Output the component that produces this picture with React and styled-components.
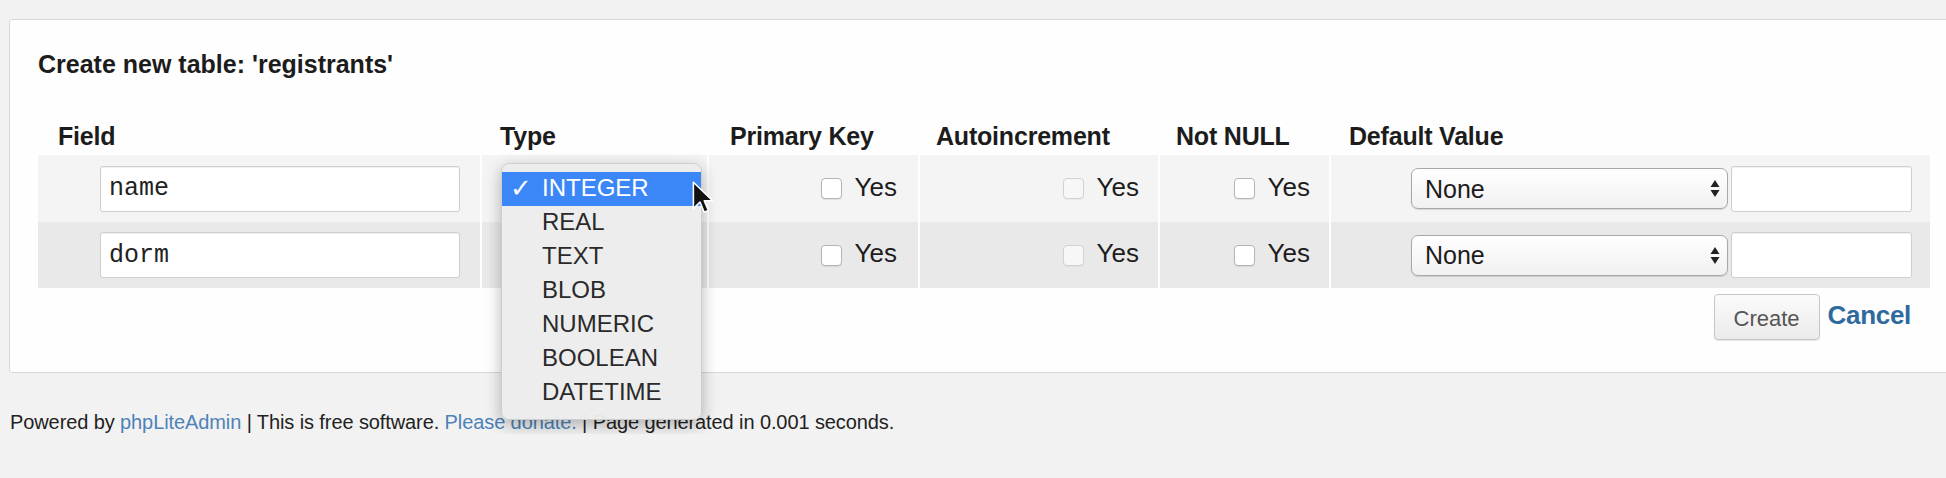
import React from 'react';
import styled, {createGlobalStyle} from 'styled-components';

const GlobalStyle = createGlobalStyle`
    body {
        margin: 0;
        background: #f2f2f2;
        font-family: "Liberation Sans", Helvetica, Arial, sans-serif;
        color: #1c1c1c;
        overflow: hidden;
    }
`

const COLUMNS = '442px 225px 209px 238px 169px 599px';

const Page = styled.div`
    padding: 19px 0 0 9px;
    width: 1946px;
    box-sizing: border-box;
`

const Panel = styled.div`
    width: 1960px;
    box-sizing: border-box;
    background: #fefefe;
    border: 1px solid #d8d8d8;
    border-radius: 3px;
    padding: 30px 0 32px 28px;
`

const Title = styled.h2`
    margin: 0 0 44px;
    font-size: 25px;
    line-height: 28px;
    font-weight: bold;
`

const Row = styled.div`
    display: grid;
    grid-template-columns: ${COLUMNS};
    column-gap: 2px;
    height: ${p => p.$height || 66}px;
`

const HeadCell = styled.div`
    font-size: 25px;
    font-weight: bold;
    line-height: 28px;
    padding-left: ${p => p.$pad || 18}px;
    letter-spacing: -0.2px;
`

const Cell = styled.div`
    position: relative;
    display: flex;
    align-items: center;
    justify-content: ${p => p.$justify || 'flex-end'};
    padding: 0 ${p => p.$padRight ?? 20}px 0 ${p => p.$padLeft || 0}px;
    background: ${p => (p.$dark ? '#e9e9e9' : '#f4f4f4')};
`

const TextInput = styled.input`
    box-sizing: border-box;
    width: ${p => p.$width || 360}px;
    height: 46px;
    border: 1px solid #cfcfcf;
    border-radius: 3px;
    background: #fff;
    box-shadow: inset 0 1px 1px rgba(0, 0, 0, 0.06);
    font-family: "Liberation Mono", "Courier New", monospace;
    font-size: 25px;
    padding: 0 8px 0;
    color: #222;
    outline: none;
`

const Check = styled.span`
    display: inline-block;
    width: 19px;
    height: 19px;
    border-radius: 4px;
    border: 1px solid ${p => (p.$disabled ? '#d2d2d2' : '#b4b4b4')};
    background: ${p => (p.$disabled ? '#f7f7f7' : '#fff')};
    box-shadow: 0 1px 1px rgba(0, 0, 0, ${p => (p.$disabled ? 0.04 : 0.08)});
`

const Yes = styled.span`
    font-size: 26px;
    margin-left: 13px;
    margin-top: -3px;
    color: #1c1c1c;
`

const SelectWrap = styled.div`
    position: relative;
    width: 317px;
    height: 41px;
`

const Select = styled.select`
    appearance: none;
    width: 100%;
    height: 100%;
    box-sizing: border-box;
    border: 1px solid #a8a8a8;
    border-radius: 7px;
    background: linear-gradient(#ffffff, #f1f1f1);
    font-family: "Liberation Sans", Helvetica, Arial, sans-serif;
    font-size: 25px;
    color: #1c1c1c;
    padding: 0 0 0 13px;
    box-shadow: 0 1px 1px rgba(0, 0, 0, 0.12);
`

const Arrows = styled.svg`
    position: absolute;
    right: 8px;
    top: 11px;
    pointer-events: none;
`

const Actions = styled.div`
    display: flex;
    justify-content: flex-end;
    align-items: center;
    width: 1892px;
    margin-top: 6px;
    padding-right: 19px;
    box-sizing: border-box;
`

const Button = styled.button`
    width: 106px;
    height: 46px;
    border: 1px solid #c6c6c6;
    border-radius: 4px;
    background: linear-gradient(#fbfbfb, #ebebeb);
    box-shadow: 0 1px 1px rgba(0, 0, 0, 0.1);
    font-family: "Liberation Sans", Helvetica, Arial, sans-serif;
    font-size: 22px;
    color: #555;
    padding-top: 4px;
`

const CancelLink = styled.a`
    font-size: 26px;
    font-weight: bold;
    color: #2e6a9e;
    text-decoration: none;
    margin-left: 8px;
    margin-top: -4px;
    letter-spacing: -0.3px;
`

const Footer = styled.div`
    margin: 37px 0 0 1px;
    font-size: 20px;
    line-height: 24px;
    color: #222;
    letter-spacing: -0.1px;
`

const FootLink = styled.a`
    color: #4d82b8;
    text-decoration: none;
`

const Dropdown = styled.ul`
    position: absolute;
    left: 19px;
    top: 8px;
    width: 201px;
    margin: 0;
    padding: 8px 0 9px;
    list-style: none;
    background: rgba(236, 236, 236, 0.97);
    border: 1px solid #cdcdcd;
    border-radius: 8px;
    box-shadow: 0 5px 16px rgba(0, 0, 0, 0.28);
    z-index: 10;
    box-sizing: border-box;
`

const Option = styled.li`
    position: relative;
    height: 34px;
    line-height: 32px;
    padding-left: 40px;
    font-size: 24px;
    color: ${p => (p.$selected ? '#fff' : '#2a2a2a')};
    background: ${p => (p.$selected ? '#3b87f7' : 'transparent')};
`

const Tick = styled.span`
    position: absolute;
    left: 8px;
    top: 0;
    font-size: 26px;
    font-weight: bold;
    font-family: "DejaVu Sans", sans-serif;
`

const Cursor = styled.svg`
    position: absolute;
    left: 209px;
    top: 26px;
    z-index: 11;
`

const TYPES = ['INTEGER', 'REAL', 'TEXT', 'BLOB', 'NUMERIC', 'BOOLEAN', 'DATETIME'];

const fields = [
    {name: 'name', dark: false, height: 67},
    {name: 'dorm', dark: true, height: 66},
];

function YesBox({dark, disabled, pad}) {
    return (
        <Cell $dark={dark} $padRight={pad}>
            <Check $disabled={disabled} />
            <Yes>Yes</Yes>
        </Cell>
    );
}

function FieldRow({field, first}) {
    const dark = field.dark;
    return (
        <Row $height={field.height}>
            <Cell $dark={dark}>
                <TextInput defaultValue={field.name} />
            </Cell>
            <Cell $dark={dark} $justify="flex-start" $padRight={0}>
                {first && (
                    <>
                        <Dropdown>
                            {TYPES.map((t, i) => (
                                <Option key={t} $selected={i === 0}>
                                    {i === 0 && <Tick>✓</Tick>}
                                    {t}
                                </Option>
                            ))}
                        </Dropdown>
                        <Cursor width="24" height="36" viewBox="0 0 20 30">
                            <path d="M2 1 L2 23 L7.5 17.5 L11 26 L14.5 24.5 L11 16.5 L18 16.5 Z" fill="#111" stroke="#fff" strokeWidth="1.3" strokeLinejoin="round" />
                        </Cursor>
                    </>
                )}
            </Cell>
            <YesBox dark={dark} pad={21} />
            <YesBox dark={dark} disabled pad={19} />
            <YesBox dark={dark} pad={19} />
            <Cell $dark={dark} $justify="flex-start" $padLeft={80} $padRight={0}>
                <SelectWrap>
                    <Select defaultValue="none">
                        <option value="none">None</option>
                    </Select>
                    <Arrows width="10" height="19" viewBox="0 0 10 19">
                        <path d="M5 1 L9.5 8 L0.5 8 Z" fill="#222" />
                        <path d="M5 18 L9.5 11 L0.5 11 Z" fill="#222" />
                    </Arrows>
                </SelectWrap>
                <TextInput $width={181} style={{marginLeft: 3}} />
            </Cell>
        </Row>
    );
}

export default function App() {
    return (
        <>
            <GlobalStyle />
            <Page>
                <Panel>
                    <Title>Create new table: 'registrants'</Title>
                    <Row $height={33}>
                        <HeadCell $pad={20}>Field</HeadCell>
                        <HeadCell>Type</HeadCell>
                        <HeadCell $pad={21}>Primary Key</HeadCell>
                        <HeadCell $pad={16}>Autoincrement</HeadCell>
                        <HeadCell $pad={16}>Not NULL</HeadCell>
                        <HeadCell>Default Value</HeadCell>
                    </Row>
                    {fields.map((f, i) => (
                        <FieldRow key={f.name} field={f} first={i === 0} />
                    ))}
                    <Actions>
                        <Button>Create</Button>
                        <CancelLink href="#">Cancel</CancelLink>
                    </Actions>
                </Panel>
                <Footer>
                    Powered by <FootLink href="#">phpLiteAdmin</FootLink> | This is free software.{' '}
                    <FootLink href="#">Please donate.</FootLink> | Page generated in 0.001 seconds.
                </Footer>
            </Page>
        </>
    );
}
